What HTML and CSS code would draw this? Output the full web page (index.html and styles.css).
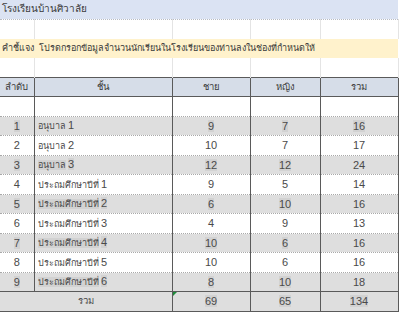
FILE: index.html
```html
<!DOCTYPE html>
<html lang="th">
<head>
<meta charset="utf-8">
<link rel="stylesheet" href="styles.css">
</head>
<body>
<table class="sheet">
  <colgroup>
    <col class="c-no"><col class="c-grade"><col class="c-m"><col class="c-f"><col class="c-t">
  </colgroup>
  <tr class="r-title"><td colspan="5">โรงเรียนบ้านศิวาลัย</td></tr>
  <tr class="r-blank"><td></td><td></td><td></td><td></td><td></td></tr>
  <tr class="r-note"><td colspan="5">คำชี้แจง&nbsp; โปรดกรอกข้อมูลจำนวนนักเรียนในโรงเรียนของท่านลงในช่องที่กำหนดให้</td></tr>
  <tr class="r-blank"><td></td><td></td><td></td><td></td><td></td></tr>
  <tr class="r-head"><td>ลำดับ</td><td>ชั้น</td><td>ชาย</td><td>หญิง</td><td>รวม</td></tr>
  <tr class="r-data r-empty"><td></td><td></td><td></td><td></td><td></td></tr>
  <tr class="r-data alt"><td><span>1</span></td><td class="l">อนุบาล <span class="n plain">1</span></td><td><span>9</span></td><td><span>7</span></td><td><span>16</span></td></tr>
  <tr class="r-data"><td>2</td><td class="l">อนุบาล <span class="n">2</span></td><td>10</td><td>7</td><td>17</td></tr>
  <tr class="r-data alt"><td><span>3</span></td><td class="l"><span>อนุบาล</span> <span class="n">3</span></td><td><span>12</span></td><td><span>12</span></td><td>24</td></tr>
  <tr class="r-data"><td>4</td><td class="l">ประถมศึกษาปีที่ <span class="n">1</span></td><td>9</td><td>5</td><td>14</td></tr>
  <tr class="r-data alt"><td><span>5</span></td><td class="l"><span>ประถมศึกษาปีที่</span> <span class="n">2</span></td><td><span>6</span></td><td><span>10</span></td><td>16</td></tr>
  <tr class="r-data"><td>6</td><td class="l">ประถมศึกษาปีที่ <span class="n">3</span></td><td>4</td><td>9</td><td>13</td></tr>
  <tr class="r-data alt"><td><span>7</span></td><td class="l"><span>ประถมศึกษาปีที่</span> <span class="n">4</span></td><td><span>10</span></td><td><span>6</span></td><td>16</td></tr>
  <tr class="r-data"><td>8</td><td class="l">ประถมศึกษาปีที่ <span class="n">5</span></td><td>10</td><td>6</td><td>16</td></tr>
  <tr class="r-data alt"><td><span>9</span></td><td class="l"><span>ประถมศึกษาปีที่</span> <span class="n">6</span></td><td><span>8</span></td><td><span>10</span></td><td>18</td></tr>
  <tr class="r-total"><td colspan="2" class="label">รวม</td><td class="flag"><span>69</span></td><td><span>65</span></td><td><span>134</span></td></tr>
</table>
</body>
</html>
```

FILE: styles.css
```css
html, body {
  margin: 0;
  padding: 0;
  background: #ffffff;
}
body {
  width: 400px;
  height: 313px;
  overflow: hidden;
  font-family: "Liberation Sans", "DejaVu Sans", sans-serif;
  font-size: 10px;
  color: #3a3a3a;
}
.sheet {
  border-collapse: collapse;
  table-layout: fixed;
  width: 398px;
}
.c-no { width: 34px; }
.c-grade { width: 138px; }
.c-m { width: 78px; }
.c-f { width: 70px; }
.c-t { width: 78px; }

.sheet td {
  padding: 0 2px;
  white-space: nowrap;
  overflow: hidden;
  line-height: 14px;
}

.r-title td {
  height: 18.5px;
  padding: 0 0 0 2px;
  background: #dbe3f3;
  border-bottom: 1px dotted #b8bcc4;
}
.r-blank td {
  height: 19px;
  border-right: 1px solid #e4e4e4;
}
.r-note td {
  height: 19px;
  padding: 0 0 0 2px;
  font-size: 9px;
  background: #fff2cc;
}

.r-head td {
  height: 18.5px;
  background: #d6dde8;
  text-align: center;
  font-size: 9.5px;
  border-top: 1px solid #5a5a5a;
  border-bottom: 1px solid #5a5a5a;
  border-right: 1px solid #5a5a5a;
}
.r-data td {
  height: 18.5px;
  text-align: center;
  font-size: 11px;
  color: #4a4a4a;
  border-right: 1px solid #5a5a5a;
  border-bottom: 1px dotted #a9a9a9;
}
.r-data td.l {
  text-align: left;
  font-size: 9px;
  padding-left: 3px;
}
.r-data td.l .n {
  font-size: 11px;
}
.r-data.alt td {
  background: #dedede;
}
.r-data.alt span,
.r-total span {
  background: #d2d2d2;
}
.r-data.alt span.plain {
  background: transparent;
}

.r-total td {
  height: 18.5px;
  background: #dedede;
  text-align: center;
  font-size: 11px;
  color: #4a4a4a;
  border-top: 1px solid #5a5a5a;
  border-bottom: 1px solid #5a5a5a;
  border-right: 1px solid #5a5a5a;
}
.r-total td.label {
  font-size: 9.5px;
}
.r-total td.flag {
  position: relative;
}
.r-total td.flag::before {
  content: "";
  position: absolute;
  left: 0;
  top: 0;
  border-top: 4px solid #1e8a3a;
  border-right: 4px solid transparent;
}
```
